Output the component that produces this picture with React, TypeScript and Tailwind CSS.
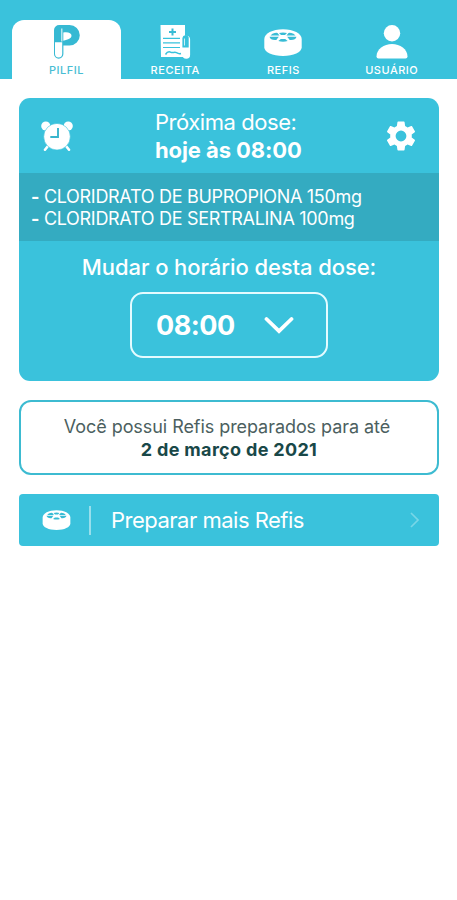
import React from 'react';

function PilfilIcon() {
  return (
    <svg width="40" height="40" viewBox="0 0 40 40" fill="none">
      <path d="M7 8a5.200 5.200 0 0 1 5.200-5h10.300a10.200 10.200 0 0 1 0 20.600h-6.100V32a4.700 4.700 0 0 1-9.400 0z" fill="#36b9d3" />
      <path d="M14.800 6.500v13" stroke="#d8f4f8" strokeWidth="1.200" />
      <path d="M16.300 10.500c5-.8 8.200.6 8.200 3.200 0 2.500-3.200 3.500-8.200 5z" fill="#fff" />
      <path d="M8 20.300h7.200v11.500a3.600 3.600 0 0 1-7.200 0z" fill="#fff" />
    </svg>
  );
}

function ReceitaIcon() {
  return (
    <svg width="40" height="40" viewBox="0 0 40 40" fill="none">
      <path d="M5.500 3H30v13l-1.500 2v13.500c0 1.500.5 2.500 1.500 3.500H6z" fill="#fff" />
      <path d="M17.500 6.500v7M14 10h7" stroke="#38bcd5" strokeWidth="2" />
      <path d="M8 16.300h17M8 20.800h17M8 25.500h17" stroke="#38c2dc" strokeWidth="1.200" />
      <path d="M10.500 32.500c1.800-3 3.500-3.300 5.500-2.200 2 1 3.500-.8 5.500.4s2.500 1.300 4.500.8" stroke="#38c2dc" strokeWidth="1.500" />
      <path d="M27.500 17.500a3.800 3.800 0 0 1 7.600 0V33a3.800 3.800 0 0 1-7.600 0z" fill="#fff" />
      <path d="M27.400 16a3 3 0 0 1 6.300 1v8.500h-6.300z" fill="#38c2dc" />
      <path d="M29.500 16.500v7" stroke="#c9f1f7" strokeWidth="1" />
    </svg>
  );
}

function RefisIcon({ className }: { className: string }) {
  return (
    <svg className={className} viewBox="0 0 38 27" fill="none">
      <path d="M.3 10C.3 4.500 8.500.2 19 .2S37.700 4.500 37.700 10v8.300C37.700 23.300 29.500 27 19 27S.3 23.300.3 18.300z" fill="#fff" />
      <g fill="#38bcd5">
        <path d="M15 4q4-1 8 0l-2 2h-4z" />
        <path d="M8.500 4.700q3-1.200 5-.8l2 2.700H6.500z" />
        <path d="M29.500 4.700q-3-1.200-5-.8l-2 2.700h9z" />
        <path d="M5.500 7.800h9.300l-2.500 3.200q-5.800.5-6.800-3.200z" />
        <path d="M32.500 7.800h-9.300l2.500 3.200q5.800.5 6.800-3.200z" />
        <path d="m16.800 10-2.500 2q4.700 1.600 9.400 0l-2.500-2z" />
      </g>
    </svg>
  );
}

function UserIcon() {
  return (
    <svg width="40" height="40" viewBox="0 0 40 40" fill="#fff">
      <circle cx="20" cy="11.200" r="8.200" />
      <path d="M4.500 34.500C4.500 27 12 22 20 22s15.500 5 15.500 12.500q0 2-2 2h-27q-2 0-2-2z" />
    </svg>
  );
}

function AlarmIcon() {
  return (
    <svg width="32" height="30" viewBox="0 0 32 30" fill="none">
      <circle cx="4.800" cy="5" r="4.600" fill="#fff" />
      <circle cx="27.200" cy="5" r="4.600" fill="#fff" />
      <path d="m7 25-3 3.700M25 25l3 3.700" stroke="#fff" strokeWidth="2.600" strokeLinecap="round" />
      <circle cx="16" cy="15.700" r="13.300" fill="#fff" stroke="#38c2dc" strokeWidth="0.600" />
      <path d="M17 7v9H9.300" stroke="#38b5cd" strokeWidth="1.900" />
    </svg>
  );
}

function GearIcon() {
  return (
    <svg width="36" height="36" viewBox="0 0 24 24" fill="#fff">
      <path d="M19.140 12.940c.04-.3.060-.61.060-.94s-.02-.64-.07-.94l2.030-1.580a.49.490 0 0 0 .12-.61l-1.920-3.320a.488.488 0 0 0-.59-.22l-2.390.96c-.5-.38-1.030-.7-1.620-.94l-.36-2.540a.484.484 0 0 0-.48-.41h-3.840c-.24 0-.43.17-.47.41l-.36 2.540c-.59.24-1.130.57-1.620.94l-2.390-.96c-.22-.08-.47 0-.59.22L2.740 8.870c-.12.21-.08.47.12.61l2.030 1.580c-.05.3-.09.63-.09.94s.02.64.07.94l-2.030 1.580a.49.490 0 0 0-.12.61l1.920 3.320c.12.22.37.29.59.22l2.390-.96c.5.38 1.030.7 1.620.94l.36 2.540c.05.24.24.41.48.41h3.840c.24 0 .44-.17.47-.41l.36-2.540c.59-.24 1.130-.56 1.620-.94l2.390.96c.22.08.47 0 .59-.22l1.920-3.320c.12-.22.07-.47-.12-.61zM12 15.600A3.600 3.600 0 1 1 12 8.400a3.600 3.600 0 0 1 0 7.200z" />
    </svg>
  );
}

function Tab({ label, active, children }: { label: string; active?: boolean; children: React.ReactNode }) {
  return (
    <div
      className={
        active
          ? 'flex h-[59px] w-[109px] flex-col items-center rounded-t-[12px] bg-white pt-[2px] text-[#48bdd3]'
          : 'flex h-[59px] w-[108.300px] flex-col items-center pt-[2px] text-white'
      }
    >
      <div className="flex h-10 items-center justify-center">{children}</div>
      <span className="text-[11px] leading-[17px] font-medium tracking-[0.520px]">{label}</span>
    </div>
  );
}

export default function App() {
  return (
    <div className="h-[900px] w-[457px] bg-white font-['Inter','Liberation_Sans',sans-serif] text-white">
      <header className="flex h-[79px] items-end bg-[#3ac2dc] pl-3">
        <Tab label="PILFIL" active><PilfilIcon /></Tab>
        <Tab label="RECEITA"><ReceitaIcon /></Tab>
        <Tab label="REFIS"><RefisIcon className="h-[27px] w-[38px]" /></Tab>
        <Tab label="USUÁRIO"><UserIcon /></Tab>
      </header>

      <main className="flex flex-col pt-[19px] pr-[18px] pl-[19px]">
        <section className="h-[283px] overflow-hidden rounded-[11px] bg-[#3ac2dc]">
          <div className="flex h-[75px] items-center pr-[20px] pl-[22px]">
            <AlarmIcon />
            <div className="ml-[82px] pt-px text-[22px] leading-7">
              <p className="tracking-[-0.450px]">Próxima dose:</p>
              <p className="font-bold tracking-[-0.100px]">hoje às 08:00</p>
            </div>
            <div className="ml-auto"><GearIcon /></div>
          </div>
          <div className="h-[68px] bg-[#34abc1] pt-[12.500px] pl-[12px] text-[18px] leading-[22px] tracking-[-0.300px]">
            <p><b>-</b> CLORIDRATO DE BUPROPIONA 150mg</p>
            <p><b>-</b> CLORIDRATO DE SERTRALINA 100mg</p>
          </div>
          <p className="pt-[12px] text-center text-[22px] leading-7 font-medium tracking-[-0.080px]">Mudar o horário desta dose:</p>
          <button className="mx-auto mt-[11px] flex h-[66px] w-[198px] items-center rounded-[13px] border-2 border-[#e4fbff] pl-[24px]">
            <span className="w-[108px] pt-[2px] text-left text-[27px] font-bold tracking-[-0.500px]">08:00</span>
            <svg width="30" height="18" viewBox="0 0 30 18" fill="none" stroke="#fff" strokeWidth="3.800" strokeLinecap="round" strokeLinejoin="miter">
              <path d="m2.500 3 12.500 12L27.500 3" />
            </svg>
          </button>
        </section>

        <section className="mt-[19px] flex h-[75px] flex-col items-center rounded-[12px] border-2 border-[#3dbbd1] pt-[13px] text-[18px]">
          <p className="-ml-[4px] leading-[23px] tracking-[-0.060px] text-[#4c5f60]">Você possui Refis preparados para até</p>
          <p className="leading-[24px] font-bold tracking-[0.330px] text-[#194848]">2 de março de 2021</p>
        </section>

        <button className="mt-[19px] flex h-[52px] items-center rounded-[4px] bg-[#3ac2dc] pl-[23px]">
          <RefisIcon className="h-[20px] w-[29px]" />
          <span className="ml-[18px] h-[29px] w-[2px] bg-[#98dfec]" />
          <span className="ml-[20px] text-[22px] tracking-[-0.500px]">Preparar mais Refis</span>
          <svg className="mr-[18px] ml-auto" width="12" height="16" viewBox="0 0 12 16" fill="none" stroke="#78d6e7" strokeWidth="1.700">
            <path d="m2 1 7 7-7 7" />
          </svg>
        </button>
      </main>
    </div>
  );
}
